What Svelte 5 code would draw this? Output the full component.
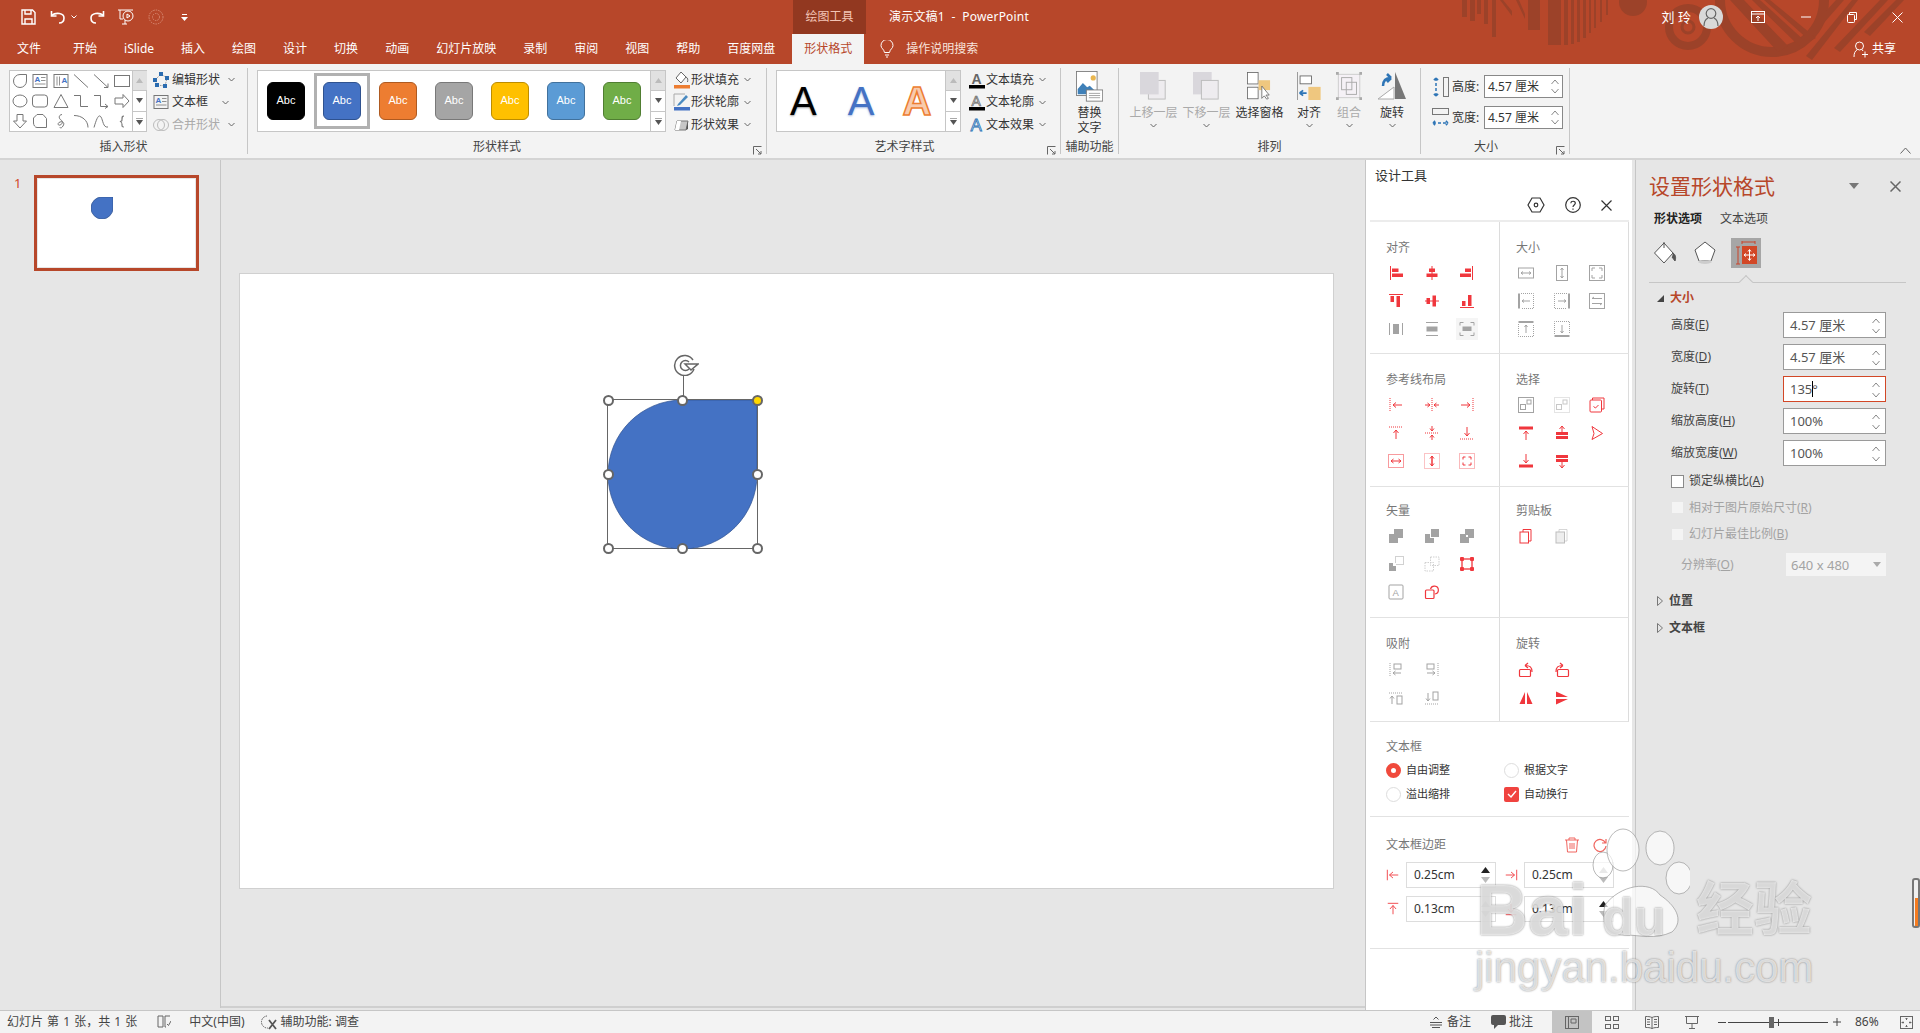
<script>
	const F = 'fill="currentColor" stroke="none"';

	const ICONS = {
		// shape gallery
		gTear: '<path d="M8 1.5h6.5V8A6.5 6.5 0 1 1 8 1.5Z"/>',
		gText: '<rect x="1" y="1.5" width="14" height="13"/><text x="2.5" y="9" font-size="8" font-weight="700" fill="#4472c4" stroke="none" font-family="Liberation Sans">A</text><path d="M9 4.5h4.5M9 7.5h4.5M3 11h10.5" stroke-width=".8"/>',
		gVText: '<rect x="1" y="1.5" width="14" height="13"/><text x="8.5" y="10" font-size="8" font-weight="700" fill="#4472c4" stroke="none" font-family="Liberation Sans">A</text><path d="M4 3.5v9M6.5 3.5v9" stroke-width=".8"/>',
		gLine: '<path d="M1 1.5 15 14.5"/>',
		gArrow: '<path d="M1 1.5 15 14.5M15 14.5h-4M15 14.5v-4"/>',
		gRect: '<rect x=".5" y="2.5" width="15" height="11"/>',
		gOval: '<ellipse cx="8" cy="8" rx="7" ry="6"/>',
		gRound: '<rect x=".5" y="2" width="15" height="12" rx="3"/>',
		gTri: '<path d="M8 1.5 15 14.5H1Z"/>',
		gElbow: '<path d="M1 2.5h6.5v11H15"/>',
		gElbowA: '<path d="M1 2.5h6.5v11H15M12 11l3 2.5-3 2"/>',
		gBlock: '<path d="M1 5h8V1.5L15 8l-6 6.5V11H1Z"/>',
		gDown: '<path d="M5 1.5h6V8h3.5L8 15 1.5 8H5Z"/>',
		gFlow: '<path d="M1.5 5 5 1.5h6l3.5 4v9H5C3 14.5 1.5 12 1.5 10Z"/>',
		gSquig: '<path d="M9 1.5C5 2 6 6 8 7s2 4-1 5c-2 1-3-2 0-3s5 1 3 4-3 2-3 1"/>',
		gArc: '<path d="M1 2.5c8 0 14 5 14 12"/>',
		gCurve: '<path d="M1 14.5C4 4 6 1 8 4s2 11 7 10"/>',
		gBrace: '<path d="M10 3c-2 0-2 1-2 3s0 2-2 2.5c2 .5 2 1 2 3s0 2.5 2 2.5" stroke-width="1.2"/>',
		// align
		alignL: `<path d="M2.5 1v14"/><path ${F} d="M4 3.5h6.5V7H4zM4 8.5h11V12H4z"/>`,
		alignC: `<path d="M8 1v14"/><path ${F} d="M5 3.5h6V7H5zM2.5 8.5h11V12h-11z"/>`,
		alignR: `<path d="M13.5 1v14"/><path ${F} d="M6 3.5h6V7H6zM1 8.5h11V12H1z"/>`,
		alignT: `<path d="M1 1.5h14"/><path ${F} d="M2.5 3H6v6H2.5zM8.5 3H12v11H8.5z"/>`,
		alignM: `<path d="M1 8h14"/><path ${F} d="M2.5 5H6v6H2.5zM8.5 2.5H12v11H8.5z"/>`,
		alignB: `<path d="M1 14.5h14"/><path ${F} d="M3 8h3.5v5H3zM9 2h3.5v11H9z"/>`,
		distH: `<path d="M1.5 2v12M14.5 2v12"/><rect ${F} x="5" y="3" width="6" height="10"/>`,
		distV: `<path d="M2 1.5h12M2 14.5h12"/><rect ${F} x="2.5" y="5.5" width="11" height="5"/>`,
		distBox: `<path d="M1 4.5V1.5h3.5M11.5 1.5H15v3M15 11.5v3h-3.5M4.5 14.5H1v-3"/><rect ${F} x="3.5" y="5.5" width="9" height="4.5"/>`,
		// size
		sizeW: '<rect x=".5" y="3" width="15" height="10"/><path d="M3 8h10M3 8l2-1.5M3 8l2 1.5M13 8l-2-1.5M13 8l-2 1.5"/>',
		sizeH: '<rect x="2.5" y=".5" width="11" height="15"/><path d="M8 3v10M8 3 6.5 5M8 3l1.500 2M8 13l-1.500-2M8 13l1.500-2"/>',
		sizeB: '<rect x=".5" y=".5" width="15" height="15"/><path d="M3 6V3h3M10 3h3v3M13 10v3h-3M6 13H3v-3"/>',
		extL: '<path d="M1 .5v15" stroke-width="2"/><path d="M3 .5h12.500v15H3" stroke-dasharray="1 1"/><path d="M4 8h8M4 8l2-1.500M4 8l2 1.500"/>',
		extR: '<path d="M15 .5v15" stroke-width="2"/><path d="M13 .5H.5v15H13" stroke-dasharray="1 1"/><path d="M4 8h8M12 8l-2-1.500M12 8l-2 1.500"/>',
		sizeEq: '<rect x=".5" y=".5" width="15" height="15"/><path d="M3 5.500h10M3 5.500l2-1.500M3 10.500h10M13 10.500l-2 1.500"/>',
		extT: '<path d="M.5 1h15" stroke-width="2"/><path d="M.5 3v12.500h15V3" stroke-dasharray="1 1"/><path d="M8 4v8M8 4 6.500 6M8 4l1.500 2"/>',
		extB: '<path d="M.5 15h15" stroke-width="2"/><path d="M.5 13V.5h15V13" stroke-dasharray="1 1"/><path d="M8 4v8M8 12l-1.500-2M8 12l1.500-2"/>',
		// guides
		guL: '<path d="M2 1v14" stroke-dasharray="1 1"/><path d="M5 8h9M5 8l3-2.500M5 8l3 2.500"/>',
		guC: '<path d="M8 1v14" stroke-dasharray="1 1"/><path d="M1 8h5M6 8 3.500 6M6 8l-2.500 2M15 8h-5M10 8l2.500-2M10 8l2.500 2"/>',
		guR: '<path d="M14 1v14" stroke-dasharray="1 1"/><path d="M2 8h9M11 8 8 5.500M11 8l-3 2.500"/>',
		guT: '<path d="M1 2h14" stroke-dasharray="1 1"/><path d="M8 5v9M8 5 5.500 8M8 5l2.500 3"/>',
		guM: '<path d="M1 8h14" stroke-dasharray="1 1"/><path d="M8 1v5M8 6 6 3.500M8 6l2-2.500M8 15v-5M8 10l-2 2.500M8 10l2 2.500"/>',
		guB: '<path d="M1 14h14" stroke-dasharray="1 1"/><path d="M8 2v9M8 11 5.500 8M8 11l2.500-3"/>',
		guW: '<rect x=".5" y="1.500" width="15" height="13" stroke-dasharray="1 1"/><path d="M3 8h10M3 8l2.500-2M3 8l2.500 2M13 8l-2.500-2M13 8l-2.500 2"/>',
		guH: '<rect x=".5" y=".5" width="15" height="15" stroke-dasharray="1 1" opacity=".6"/><path d="M8 3v10" stroke-width="1.500"/><path d="M8 3 6 5.500M8 3l2 2.500M8 13l-2-2.500M8 13l2-2.500"/>',
		guB2: '<rect x=".5" y=".5" width="15" height="15" stroke-dasharray="1 1" opacity=".7"/><path d="M4 6.500V4h2.500M9.500 4H12v2.500M12 9.500V12H9.500M6.500 12H4V9.500"/>',
		// select
		selA: '<rect x=".5" y=".5" width="15" height="15"/><rect x="2.500" y="7.500" width="5" height="5"/><rect x="9" y="3" width="4" height="4"/>',
		selB: '<rect x=".5" y=".5" width="15" height="15" stroke-dasharray="1 1"/><rect x="2.500" y="7.500" width="5" height="5"/><rect x="9" y="3" width="4" height="4"/>',
		selC: '<rect x="1" y="3" width="11.500" height="12" rx="1"/><path d="M3.500 3V1h11.500v11h-2.500"/><path d="M4.500 9.500 6.500 11l3-3"/>',
		selT: `<rect ${F} x="1" y="1.500" width="14" height="3"/><path d="M8 6v9M8 6 5.500 9M8 6l2.500 3"/>`,
		selM: `<rect ${F} x="2" y="7" width="12" height="3"/><rect ${F} x="2" y="11" width="12" height="3"/><path d="M8 1v6M8 1 5.500 4M8 1l2.500 3"/>`,
		selP: '<path d="M3 1.500 13.500 8.500 3 14.500l2-6Z"/>',
		selBo: `<rect ${F} x="1" y="11.500" width="14" height="3"/><path d="M8 1v9M8 10 5.500 7M8 10l2.500-3"/>`,
		selN: `<rect ${F} x="2" y="2" width="12" height="3"/><rect ${F} x="2" y="6" width="12" height="3"/><path d="M8 9v6M8 15l-2.500-3M8 15l2.500-3"/>`,
		// vector
		vUnion: `<path ${F} d="M1 6h5V1h9v9h-5v5H1Z"/>`,
		vSub: `<path ${F} d="M1 6h5v4h4v5H1Z"/><rect ${F} x="7" y="1" width="8" height="8"/>`,
		vInt: `<path ${F} fill-rule="evenodd" d="M1 6h5V1h9v9h-5v5H1ZM7 7v2h2V7Z"/>`,
		vFrag: `<path ${F} d="M1 7h7v8H1Z"/><rect x="7.500" y=".5" width="8" height="8" stroke-dasharray="1 1"/><rect x="5" y="7" width="3" height="3" fill="#fff" stroke="none"/>`,
		vCopy: '<rect x="1" y="6.500" width="8.500" height="8.500" stroke-dasharray="1.500 1"/><rect x="6.500" y="1" width="8.500" height="8.500" stroke-dasharray="1.500 1"/>',
		vNode: `<rect x="3" y="3" width="10" height="10" stroke-width="1.300"/><rect ${F} x="1" y="1" width="4" height="4" rx="1"/><rect ${F} x="11" y="1" width="4" height="4" rx="1"/><rect ${F} x="1" y="11" width="4" height="4" rx="1"/><rect ${F} x="11" y="11" width="4" height="4" rx="1"/>`,
		vText: '<rect x="1" y="1" width="14" height="14" rx="1"/><text x="4.500" y="12" font-size="9.500" fill="currentColor" stroke="none" font-family="Liberation Sans">A</text>',
		vShape: '<rect x="1.500" y="6" width="8.500" height="8.500" rx="1" stroke-width="1.200"/><path d="M6.500 5A4 4 0 1 1 11 10" stroke-width="1.200"/>',
		// clipboard
		clipA: '<rect x="2" y="4" width="8.500" height="11"/><path d="M5 4V1.500h8V13h-2.500"/>',
		clipB: '<rect x="2" y="4" width="8.500" height="11" fill="#eee"/><path d="M5 4V1.500h8V13h-2.500" opacity=".6"/>',
		// snap
		snA: '<path d="M2 1v14" stroke-dasharray="1 1"/><rect x="6" y="2" width="7" height="5"/><path d="M5 11h8M5 11l2.500-2M5 11l2.500 2"/>',
		snB: '<path d="M14 1v14" stroke-dasharray="1 1"/><rect x="3" y="2" width="7" height="5"/><path d="M3 11h8M11 11 8.500 9M11 11l-2.500 2"/>',
		snC: '<path d="M1 3h14" stroke-dasharray="1 1"/><rect x="9" y="6" width="5" height="8"/><path d="M4 6v8M4 6 2 8.500M4 6l2 2.500"/>',
		snD: '<path d="M1 14h14" stroke-dasharray="1 1"/><rect x="9" y="2" width="5" height="8"/><path d="M4 3v8M4 11 2 8.500M4 11l2-2.500"/>',
		// rotate
		rotL: '<rect x="1.500" y="7.500" width="11" height="7" rx="1" stroke-width="1.200"/><path d="M14 10C14 5 12 3.500 7 3.500M7 3.500 10 1M7 3.500l3 2.500" stroke-width="1.200"/>',
		rotR: '<rect x="3.500" y="7.500" width="11" height="7" rx="1" stroke-width="1.200"/><path d="M2 10c0-5 2-6.500 7-6.500M9 3.500 6 1M9 3.500 6 6" stroke-width="1.200"/>',
		flipH: `<path ${F} d="M1.500 14 7 2v12ZM14.500 14 9 2v12Z"/>`,
		flipV: `<path ${F} d="M2 1.500 14 7H2ZM2 14.500 14 9H2Z"/>`,
		// margins
		mL: '<path d="M1.500 2v12M4 8h10M4 8l4-3.500M4 8l4 3.500"/>',
		mR: '<path d="M14.500 2v12M2 8h10M12 8 8 4.500M12 8l-4 3.500"/>',
		mT: '<path d="M2 1.500h12M8 4v10M8 4 4.500 8M8 4l3.500 4"/>',
		mB: '<path d="M2 14.500h12M8 2v10M8 12 4.500 8M8 12l3.500-4"/>'
	};

	const tabs = ['文件', '开始', 'iSlide', '插入', '绘图', '设计', '切换', '动画', '幻灯片放映', '录制', '审阅', '视图', '帮助', '百度网盘'];
	const galleryShapes = ['gTear', 'gText', 'gVText', 'gLine', 'gArrow', 'gRect', 'gOval', 'gRound', 'gTri', 'gElbow', 'gElbowA', 'gBlock', 'gDown', 'gFlow', 'gSquig', 'gArc', 'gCurve', 'gBrace'];
	const swatches = [
		{ bg: '#000000', line: '#000000' },
		{ bg: '#4472c4', line: '#2f528f', selected: true },
		{ bg: '#ed7d31', line: '#ae5a21' },
		{ bg: '#a5a5a5', line: '#787878' },
		{ bg: '#ffc000', line: '#bc8c00' },
		{ bg: '#5b9bd5', line: '#41719c' },
		{ bg: '#70ad47', line: '#507e32' }
	];
	const arrange = [
		{ label: '上移一层', w: 53, off: true, kind: 'up' },
		{ label: '下移一层', w: 53, off: true, kind: 'down' },
		{ label: '选择窗格', w: 53, kind: 'pane' },
		{ label: '对齐', w: 46, kind: 'align', more: true },
		{ label: '组合', w: 34, off: true, kind: 'group', more: true },
		{ label: '旋转', w: 52, kind: 'rotate', more: true }
	];

	const RED = '#f0373d';
	const GREY = '#a3a3a3';
	const rows = [
		{
			h: 132,
			cols: [
				{ title: '对齐', icons: [['alignL', RED], ['alignC', RED], ['alignR', RED], ['alignT', RED], ['alignM', RED], ['alignB', RED], ['distH', GREY], ['distV', GREY], ['distBox', GREY, true]] },
				{ title: '大小', icons: [['sizeW', GREY], ['sizeH', GREY], ['sizeB', GREY], ['extL', GREY], ['extR', GREY], ['sizeEq', GREY], ['extT', GREY], ['extB', GREY]] }
			]
		},
		{
			h: 133,
			cols: [
				{ title: '参考线布局', icons: [['guL', RED], ['guC', RED], ['guR', RED], ['guT', RED], ['guM', RED], ['guB', RED], ['guW', RED], ['guH', RED], ['guB2', RED]] },
				{ title: '选择', icons: [['selA', GREY], ['selB', '#c8c8c8'], ['selC', RED], ['selT', RED], ['selM', RED], ['selP', RED], ['selBo', RED], ['selN', RED]] }
			]
		},
		{
			h: 131,
			tight: true,
			cols: [
				{ title: '矢量', icons: [['vUnion', GREY], ['vSub', GREY], ['vInt', GREY], ['vFrag', GREY], ['vCopy', '#cfcfcf'], ['vNode', RED], ['vText', GREY], ['vShape', RED]] },
				{ title: '剪贴板', icons: [['clipA', RED], ['clipB', '#bdbdbd']] }
			]
		},
		{
			h: 104,
			cols: [
				{ title: '吸附', two: true, icons: [['snA', GREY], ['snB', GREY], ['snC', GREY], ['snD', GREY]] },
				{ title: '旋转', two: true, icons: [['rotL', RED], ['rotR', RED], ['flipH', RED], ['flipV', RED]] }
			]
		}
	];
	const margins = [
		{ icon: 'mL', value: '0.25cm', up: true },
		{ icon: 'mR', value: '0.25cm' },
		{ icon: 'mT', value: '0.13cm' },
		{ icon: 'mB', value: '0.13cm', up: true }
	];
	const sizeRows = [
		{ label: '高度', key: 'E', value: '4.57 厘米' },
		{ label: '宽度', key: 'D', value: '4.57 厘米' },
		{ label: '旋转', key: 'T', value: '135°', focus: true },
		{ label: '缩放高度', key: 'H', value: '100%' },
		{ label: '缩放宽度', key: 'W', value: '100%' }
	];
	const handles = [
		[0, 0], [50, 0], [0, 50], [100, 50], [0, 100], [50, 100], [100, 100]
	];
</script>

{#snippet icon(name, color = 'currentColor', size = 16)}
	<svg class="ico" width={size} height={size} viewBox="0 0 16 16" fill="none" stroke={color} style="color:{color}">{@html ICONS[name]}</svg>
{/snippet}

{#snippet chev()}
	<svg class="chev" width="7" height="5" viewBox="0 0 7 5" fill="none" stroke="#666"><path d="M.5 1 3.500 4 6.500 1" /></svg>
{/snippet}

{#snippet scrollCol()}
	<div class="gscroll">
		<span class="off"><svg width="7" height="5" viewBox="0 0 7 5"><path d="M3.500 0 7 5H0Z" fill="#bbb" /></svg></span>
		<span><svg width="7" height="5" viewBox="0 0 7 5"><path d="M0 0h7L3.500 5Z" fill="#555" /></svg></span>
		<span><svg width="7" height="7" viewBox="0 0 7 7"><path d="M0 0h7" stroke="#555" /><path d="M0 2h7L3.500 7Z" fill="#555" /></svg></span>
	</div>
{/snippet}

{#snippet launcher()}
	<svg class="launch" width="9" height="9" viewBox="0 0 9 9" fill="none" stroke="#666"><path d="M.5 8.500V.5h8M3 3l5 5M8 5v3H5" /></svg>
{/snippet}

{#snippet spin()}
	<span class="spin">
		<svg width="8" height="6" viewBox="0 0 8 6" fill="none" stroke="#888"><path d="M.5 5 4 1l3.500 4" /></svg>
		<svg width="8" height="6" viewBox="0 0 8 6" fill="none" stroke="#888"><path d="M.5 1 4 5l3.500-4" /></svg>
	</span>
{/snippet}

<div class="app">
	<header class="top">
		<svg class="deco" width="460" height="64" viewBox="0 0 460 64" fill="#9c4229">
			<path d="M2 0h5v17H2zM10 0h5v21H10zM17 0h4v14h-4zM24 0h4v24h-4zM32 0h4v37h-4z" />
			<path d="M68 0h12v30H68zM88 0h13v45H88zM104 0h4v45h-4zM111 0h3v44h-3zM117 0h3v42h-3zM123 0h3v38h-3zM129 0h2v33h-2zM134 0h2v28h-2zM140 0h2v22h-2zM146 0h2v15h-2z" />
			<path d="M40 0h3l9 11v5zM56 0h3l6 14v5z" />
			<circle cx="173" cy="2" r="14" />
			<circle cx="228" cy="27" r="19" fill="none" stroke="#9c4229" stroke-width="8" />
			<circle cx="228" cy="27" r="6" fill="none" stroke="#9c4229" stroke-width="3" />
			<circle cx="312" cy="0" r="52" fill="none" stroke="#9c4229" stroke-width="10" />
			<path d="M270 0h14l44 46-10 6zM292 0h8l46 42-7 4zM304 0h6l46 38-6 3z" />
			<path d="M376 0h8l-42 48-5-5zM392 0h6l-46 60-6-4zM420 0h8l-48 52-6-4zM436 0h8l-34 36-6-4z" />
		</svg>

		<div class="titlebar">
			<div class="qat">
				<span class="q" style="width:30px">
					<svg width="15" height="16" viewBox="0 0 15 16" fill="none" stroke="#fff" stroke-width="1.400"><path d="M1 1h10.500L14 3.500V15H1Z" /><path d="M4 1v4h6V1M4 15v-5h7v5" /></svg>
				</span>
				<span class="q" style="width:40px">
					<svg width="16" height="15" viewBox="0 0 16 15" fill="none" stroke="#fff" stroke-width="1.600"><path d="M1.500 5.500C6 2 14 3 14 8c0 3-2 5-5 5" /><path d="M1.500 1v5h5" /></svg>
					<svg width="6" height="4" viewBox="0 0 6 4" fill="none" stroke="#fff"><path d="M.5.5 3 3 5.500.5" /></svg>
				</span>
				<span class="q" style="width:28px">
					<svg width="16" height="15" viewBox="0 0 16 15" fill="none" stroke="#fff" stroke-width="1.600"><path d="M14.500 5.500C10 2 2 3 2 8c0 3 2 5 5 5" /><path d="M14.500 1v5h-5" /></svg>
				</span>
				<span class="q" style="width:30px">
					<svg width="18" height="18" viewBox="0 0 18 18" fill="none" stroke="#fff"><path d="M1 2h15M3 2v9h3" /><circle cx="11" cy="8" r="5" /><path d="M10 6l3 2-3 2Z" /><path d="M5 16h5M8 12v4" /></svg>
				</span>
				<span class="q" style="width:29px">
					<svg width="16" height="16" viewBox="0 0 16 16" fill="none" stroke="#d98b74" stroke-dasharray="1.500 1"><circle cx="8" cy="8" r="7" /><circle cx="8" cy="8" r="3.500" /></svg>
				</span>
				<span class="q" style="width:29px">
					<svg width="7" height="7" viewBox="0 0 7 7" fill="#fff"><path d="M1 0h5v1H1zM0 3h7L3.500 7Z" /></svg>
				</span>
			</div>
			<div class="ctx">绘图工具</div>
			<div class="doc">演示文稿1&nbsp; -&nbsp; PowerPoint</div>
			<div class="win">
				<span class="user">刘 玲</span>
				<span class="avatar">
					<svg width="16" height="20" viewBox="0 0 16 20" fill="none" stroke="#666" stroke-width="1.200"><circle cx="8" cy="6.500" r="4.800" /><path d="M1 19c0-5 2-7 4-8M15 19c0-5-2-7-4-8" /></svg>
				</span>
				<svg class="w1" width="14" height="12" viewBox="0 0 14 12" fill="none" stroke="#fff"><rect x=".5" y=".5" width="13" height="11" /><path d="M.5 3h13M7 10V5M5 7l2-2 2 2" /></svg>
				<svg class="w2" width="10" height="10" viewBox="0 0 10 10" stroke="#fff"><path d="M0 5h10" /></svg>
				<svg class="w3" width="10" height="11" viewBox="0 0 10 11" fill="none" stroke="#fff"><rect x=".5" y="2.500" width="7" height="8" rx="1" /><path d="M2.500 2.500V.5h7v7H8" /></svg>
				<svg class="w4" width="11" height="11" viewBox="0 0 11 11" stroke="#fff"><path d="M.5.5l10 10M10.500.5l-10 10" /></svg>
			</div>
		</div>

		<nav class="tabs">
			{#each tabs as t}
				<span class="tab">{t}</span>
			{/each}
			<span class="tab active">形状格式</span>
			<span class="tell">
				<svg width="14" height="18" viewBox="0 0 14 18" fill="none" stroke="#fff"><path d="M4.500 12.500C4 9 1 8.500 1 5.500a6 6 0 0 1 12 0c0 3-3 3.500-3.500 7Z" /><path d="M5 15h4M6 17h2" /></svg>
				操作说明搜索
			</span>
			<span class="share">
				<svg width="15" height="17" viewBox="0 0 15 17" fill="none" stroke="#fff"><circle cx="6.500" cy="5" r="4" /><path d="M1 16c0-4 1-6 3.500-7.500M9 8.500 10 10M9 13.500h6M12 10.500v6" /></svg>
				共享
			</span>
		</nav>
	</header>

	<section class="ribbon">
		<div class="group" style="width:248px">
			<div class="gbody">
				<div class="gallery shapes">
					<div class="shapegrid">
						{#each galleryShapes as s}
							{@render icon(s, '#777')}
						{/each}
					</div>
					{@render scrollCol()}
				</div>
				<div class="cmds">
					<div class="cmd">
						<svg class="ci" width="16" height="16" viewBox="0 0 16 16" fill="none"><path d="M2 8 8 2l6 4-2 8-8-1Z" stroke="#999" stroke-dasharray="1.500 1" /><g fill="#2b6cb0"><rect x="6" y="0" width="4" height="4" /><rect x="0" y="6" width="4" height="4" /><rect x="12" y="4" width="4" height="4" /><rect x="10" y="12" width="4" height="4" /><rect x="2" y="11" width="4" height="4" /></g></svg>
						编辑形状 {@render chev()}
					</div>
					<div class="cmd">
						<span class="ci">{@render icon('gText', '#777')}</span>
						文本框 &nbsp;{@render chev()}
					</div>
					<div class="cmd off">
						<svg class="ci" width="16" height="16" viewBox="0 0 16 16" fill="none" stroke="#bbb"><circle cx="6" cy="8" r="5.500" /><circle cx="10" cy="8" r="5.500" /></svg>
						合并形状 {@render chev()}
					</div>
				</div>
			</div>
			<div class="glabel">插入形状</div>
		</div>

		<div class="group" style="width:519px">
			<div class="gbody">
				<div class="gallery styles">
					<div class="swatches">
						{#each swatches as s}
							<div class="swatch-wrap" class:selected={s.selected}>
								<div class="swatch" style="background:{s.bg};border-color:{s.line}">Abc</div>
							</div>
						{/each}
					</div>
					{@render scrollCol()}
				</div>
				<div class="cmds c2">
					<div class="cmd">
						<svg class="ci" width="18" height="18" viewBox="0 0 18 18" fill="none"><path d="M8 1l5 5-5 6-5-5Z" stroke="#666" fill="#fff" /><path d="M13 6c2 1 2 3 1.500 5" stroke="#666" /><rect x="1" y="14" width="16" height="3.500" fill="#ed7d31" /></svg>
						形状填充 {@render chev()}
					</div>
					<div class="cmd">
						<svg class="ci" width="18" height="18" viewBox="0 0 18 18" fill="none"><path d="M1 1h11" stroke="#aaa" /><path d="M1 1v12" stroke="#aaa" /><path d="M5 11 13 2l2 2-8 8-3 1Z" fill="#4a8ac0" /><rect x="1" y="14" width="16" height="3.500" fill="#4472c4" /></svg>
						形状轮廓 {@render chev()}
					</div>
					<div class="cmd">
						<svg class="ci" width="18" height="18" viewBox="0 0 18 18"><path d="M4 5h11l-2 9H2Z" fill="#c7c7c7" stroke="#777" /><path d="M4 5 2 14h4l2-9Z" fill="#fff" /><path d="M13 14 15 5v8Z" fill="#555" /></svg>
						形状效果 {@render chev()}
					</div>
				</div>
			</div>
			<div class="glabel" style="padding-right:20px">形状样式</div>
			{@render launcher()}
		</div>

		<div class="group" style="width:294px">
			<div class="gbody">
				<div class="gallery wordart">
					<div class="letters">
						<span class="a black">A</span>
						<span class="a blue">A</span>
						<span class="a orange">A</span>
					</div>
					{@render scrollCol()}
				</div>
				<div class="cmds c2">
					<div class="cmd">
						<svg class="ci" width="18" height="18" viewBox="0 0 18 18"><text x="3.500" y="12.500" font-size="14" font-weight="700" fill="#666" font-family="Liberation Sans">A</text><rect x="1" y="14" width="16" height="3.500" fill="#000" /></svg>
						文本填充 {@render chev()}
					</div>
					<div class="cmd">
						<svg class="ci" width="18" height="18" viewBox="0 0 18 18"><text x="3.500" y="12.500" font-size="14" fill="#fff" stroke="#666" stroke-width=".7" font-family="Liberation Sans">A</text><rect x="1" y="14" width="16" height="3.500" fill="#000" /></svg>
						文本轮廓 {@render chev()}
					</div>
					<div class="cmd">
						<svg class="ci" width="18" height="18" viewBox="0 0 18 18"><text x="2.500" y="15" font-size="17" fill="#d6e4f5" stroke="#2e75b6" stroke-width=".8" font-family="Liberation Sans">A</text></svg>
						文本效果 {@render chev()}
					</div>
				</div>
			</div>
			<div class="glabel" style="padding-right:18px">艺术字样式</div>
			{@render launcher()}
		</div>

		<div class="group" style="width:58px">
			<div class="bigs">
				<div class="big" style="width:57px">
					<div class="bigicon tall">
						<svg width="32" height="36" viewBox="0 0 32 36"><rect x=".5" y=".5" width="24" height="28" fill="#fff" stroke="#777" /><circle cx="20" cy="8" r="3" fill="#e9b64f" /><path d="M2 27V21l6-7 5 5 3-2 6 6v4Z" fill="#3f80b8" /><rect x="12" y="22" width="19" height="13" fill="#fff" stroke="#777" /><path d="M15 26h13M15 28.500h13M15 31h13" stroke="#999" /></svg>
					</div>
					<span class="biglabel two">替换<br />文字</span>
				</div>
			</div>
			<div class="glabel">辅助功能</div>
		</div>

		<div class="group" style="width:302px">
			<div class="bigs pad8">
				{#each arrange as b}
					<div class="big" class:off={b.off} style="width:{b.w}px">
						<div class="bigicon">
							{#if b.kind === 'up'}
								<svg width="28" height="30" viewBox="0 0 28 30"><rect x="9" y="9" width="18" height="20" fill="#eeecef" stroke="#bbb" /><rect x="0" y="0" width="20" height="24" fill="#d9d7dc" /></svg>
							{:else if b.kind === 'down'}
								<svg width="28" height="30" viewBox="0 0 28 30"><rect x="0" y="0" width="20" height="24" fill="#d9d7dc" /><rect x="9" y="9" width="18" height="20" fill="#eeecef" stroke="#bbb" /></svg>
							{:else if b.kind === 'pane'}
								<svg width="30" height="34" viewBox="0 0 30 34"><rect x=".5" y=".5" width="13" height="14" fill="#fff" stroke="#666" /><rect x=".5" y="18.500" width="13" height="14" fill="#fff" stroke="#666" /><rect x="14" y="10" width="14" height="12" fill="#efc77f" /><path d="M18 17v15l3-3 3 4 2-1-3-4h4Z" fill="#fff" stroke="#666" /></svg>
							{:else if b.kind === 'align'}
								<svg width="28" height="32" viewBox="0 0 28 32"><path d="M.5 0v32" stroke="#888" /><rect x="3.500" y="4.500" width="13" height="9" fill="#fff" stroke="#666" /><rect x="13" y="17" width="14" height="15" fill="#efc77f" /><path d="M3 24h8M3 24l4-3M3 24l4 3" stroke="#2e75b6" stroke-width="2" fill="none" /></svg>
							{:else if b.kind === 'group'}
								<svg width="28" height="30" viewBox="0 0 28 30" fill="none"><rect x="2.500" y="2.500" width="23" height="25" fill="#f5f1f6" stroke="#ccc" /><rect x="6" y="6" width="11" height="13" stroke="#aaa" /><rect x="11" y="11" width="11" height="13" stroke="#aaa" /><g fill="#aaa"><rect width="3" height="3" /><rect x="25" width="3" height="3" /><rect y="27" width="3" height="3" /><rect x="25" y="27" width="3" height="3" /></g></svg>
							{:else}
								<svg width="30" height="28" viewBox="0 0 30 28"><path d="M1 27 17 15v12Z" fill="#fff" stroke="#aaa" /><path d="M18 0l11 27H18Z" fill="#777" /><path d="M6 14C6 7 10 6 14 6M14 6l-4-4M14 6l-4 4" stroke="#2e75b6" stroke-width="2.500" fill="none" /></svg>
							{/if}
						</div>
						<span class="biglabel">{b.label}</span>
						{#if b.off || b.more}
							<span class="bigchev">{@render chev()}</span>
						{/if}
					</div>
				{/each}
			</div>
			<div class="glabel">排列</div>
		</div>

		<div class="group" style="width:149px">
			<div class="sizes">
				<div class="sizerow">
					<svg width="17" height="20" viewBox="0 0 17 20" fill="none"><rect x="11.500" y=".5" width="5" height="19" stroke="#777" /><path d="M4 1v18M4 1 1 4M4 1l3 3M4 19l-3-3M4 19l3-3" stroke="#2e75b6" stroke-width="1.500" stroke-dasharray="3 2" /></svg>
					<span class="sl">高度:</span>
					<span class="field">4.57 厘米 {@render spin()}</span>
				</div>
				<div class="sizerow">
					<svg width="17" height="20" viewBox="0 0 17 20" fill="none"><rect x=".5" y=".5" width="16" height="6" stroke="#777" /><path d="M1 15h15M1 15l3-3M1 15l3 3M16 15l-3-3M16 15l-3 3" stroke="#2e75b6" stroke-width="1.500" stroke-dasharray="3 2" /></svg>
					<span class="sl">宽度:</span>
					<span class="field">4.57 厘米 {@render spin()}</span>
				</div>
			</div>
			<div class="glabel" style="padding-right:18px">大小</div>
			{@render launcher()}
		</div>

		<svg class="collapse" width="11" height="7" viewBox="0 0 11 7" fill="none" stroke="#666"><path d="M.5 6.500 5.500 1l5 5.500" /></svg>
	</section>

	<main class="main">
		<aside class="thumbs">
			<span class="num">1</span>
			<div class="thumb">
				<svg width="22" height="22" viewBox="0 0 149 149"><path d="M74.500 0H149V74.500A74.500 74.500 0 1 1 74.500 0Z" fill="#4472c4" stroke="#2f528f" stroke-width="5" /></svg>
			</div>
		</aside>

		<div class="canvas">
			<div class="slide">
				<div class="shape">
					<svg class="drop" width="149" height="149" viewBox="0 0 149 149"><path d="M74.500 0H149V74.500A74.500 74.500 0 1 1 74.500 0Z" fill="#4472c4" stroke="#2f528f" stroke-width=".7" /></svg>
					<div class="stem"></div>
					<svg class="rot" width="26" height="22" viewBox="0 0 26 22" fill="none" stroke="#666" stroke-width="1.500"><path d="M21 15A10 10 0 1 1 20 6" /><path d="M16 15a5 5 0 1 1 0-7" /><path d="M12 10l6 6 7-6Z" fill="#fff" /></svg>
					{#each handles as [x, y]}
						<span class="handle" style="left:{x}%;top:{y}%"></span>
					{/each}
					<span class="handle yellow" style="left:100%;top:0"></span>
				</div>
			</div>
		</div>

		<aside class="design">
			<div class="dtitle">设计工具</div>
			<div class="dtools">
				<svg width="18" height="16" viewBox="0 0 18 16" fill="none" stroke="#333" stroke-width="1.200"><path d="M5 1h8l4 7-4 7H5L1 8Z" /><circle cx="9" cy="8" r="1.800" /></svg>
				<svg width="16" height="16" viewBox="0 0 16 16" fill="none" stroke="#333" stroke-width="1.200"><circle cx="8" cy="8" r="7.300" /><path d="M5.800 6.200C6 3.500 10.500 3.700 10.300 6.300 10.200 8 8 8 8 10" /><path d="M8 11.500v1.300" /></svg>
				<svg width="11" height="11" viewBox="0 0 11 11" stroke="#333" stroke-width="1.200"><path d="M.5.5l10 10M10.500.5l-10 10" /></svg>
			</div>

			{#each rows as row}
				<div class="drow" class:tight={row.tight} style="height:{row.h}px">
					{#each row.cols as col}
						<div class="dcol">
							<div class="dhead">{col.title}</div>
							<div class="igrid" class:two={col.two}>
								{#each col.icons as [name, color, hl]}
									<span class="cell" class:hl>{@render icon(name, color)}</span>
								{/each}
							</div>
						</div>
					{/each}
				</div>
			{/each}

			<div class="dsec tb">
				<div class="dhead">文本框</div>
				<div class="opts">
					<span class="opt"><i class="radio on"></i>自由调整</span>
					<span class="opt"><i class="radio"></i>根据文字</span>
					<span class="opt"><i class="radio"></i>溢出缩排</span>
					<span class="opt"><i class="checked"><svg width="10" height="8" viewBox="0 0 10 8" fill="none" stroke="#fff" stroke-width="1.400"><path d="M1 4l3 3 5-6" /></svg></i>自动换行</span>
				</div>
			</div>

			<div class="dsec mg">
				<div class="mghead">
					<span class="dhead">文本框边距</span>
					<svg class="trash" width="16" height="16" viewBox="0 0 16 16" fill="none" stroke="#f0655f"><path d="M1 3h14M5 3V1h6v2M2.500 3l1 12h9l1-12M6 6v6M8 6v6M10 6v6" /></svg>
					<svg width="14" height="14" viewBox="0 0 14 14" fill="none" stroke="#f0655f" stroke-width="1.200"><path d="M12.500 5A6 6 0 1 0 13 8M13 1v4H9" /></svg>
				</div>
				<div class="mggrid">
					{#each margins as m}
						<div class="mgitem">
							{@render icon(m.icon, RED, 14)}
							<div class="mgfield">
								{m.value}
								<span class="mgspin">
									<svg width="9" height="6" viewBox="0 0 9 6"><path d="M4.500 0 9 6H0Z" fill={m.up ? '#222' : '#bbb'} /></svg>
									<svg width="9" height="6" viewBox="0 0 9 6"><path d="M0 0h9L4.500 6Z" fill="#bbb" /></svg>
								</span>
							</div>
						</div>
					{/each}
				</div>
			</div>
		</aside>

		<aside class="format">
			<div class="fhead">
				<span class="ftitle">设置形状格式</span>
				<svg width="10" height="6" viewBox="0 0 10 6"><path d="M0 0h10L5 6Z" fill="#777" /></svg>
				<svg width="11" height="11" viewBox="0 0 11 11" stroke="#666" stroke-width="1.500"><path d="M.5.5l10 10M10.500.5l-10 10" /></svg>
			</div>
			<div class="ftabs"><b>形状选项</b><span>文本选项</span></div>
			<div class="ficons">
				<svg width="26" height="26" viewBox="0 0 26 26" fill="none" stroke="#555"><path d="M11 3 1.500 13 11 23l9-10Z" fill="#fff" /><path d="M11 8V2M20 13c3 2 3 5 2 8l-3-4" fill="#555" /></svg>
				<svg width="24" height="26" viewBox="0 0 24 26" fill="none" stroke="#555"><path d="M12 2 22 10l-4 11H6L2 10Z" fill="#fff" /><path d="M6 21c3 2 9 2 12 0" stroke="#ccc" stroke-width="3" /></svg>
				<span class="fsel">
					<svg width="22" height="24" viewBox="0 0 22 24" fill="none"><path d="M7 1h13M7 0v3M20 0v3" stroke="#c9452a" /><path d="M1 6h4M3 6v17M1 23h4" stroke="#c9452a" /><rect x="7" y="5" width="15" height="18" fill="#d24726" /><path d="M14.500 9v10M9.500 14h10" stroke="#fff" /><path d="M13 10.500l1.500-2 1.500 2M13 17.500l1.500 2 1.500-2M11 12.500l-2 1.500 2 1.500M18 12.500l2 1.500-2 1.500" stroke="#fff" /></svg>
				</span>
			</div>
			<div class="fline"></div>
			<div class="fsec open"><svg width="7" height="7" viewBox="0 0 7 7"><path d="M7 0v7H0Z" fill="#444" /></svg>大小</div>
			<div class="frows">
				{#each sizeRows as r}
					<div class="frow">
						<span class="flabel">{r.label}(<u>{r.key}</u>)</span>
						<span class="finput" class:focus={r.focus}>
							{#if r.focus}135<i class="caret"></i>°{:else}{r.value}{/if}
							{@render spin()}
						</span>
					</div>
				{/each}
			</div>
			<div class="fcheck"><i></i><span>锁定纵横比(<u>A</u>)</span></div>
			<div class="fcheck off"><i></i><span>相对于图片原始尺寸(<u>R</u>)</span></div>
			<div class="fcheck off"><i></i><span>幻灯片最佳比例(<u>B</u>)</span></div>
			<div class="fres">
				<span>分辨率(<u>O</u>)</span>
				<span class="fselect">640 x 480
					<svg width="8" height="5" viewBox="0 0 8 5"><path d="M0 0h8L4 5Z" fill="#aaa" /></svg>
				</span>
			</div>
			<div class="fsec one"><svg width="6" height="10" viewBox="0 0 6 10" fill="none" stroke="#777"><path d="M.5.5 5.500 5 .5 9.500Z" /></svg><b>位置</b></div>
			<div class="fsec two"><svg width="6" height="10" viewBox="0 0 6 10" fill="none" stroke="#777"><path d="M.5.5 5.500 5 .5 9.500Z" /></svg><b>文本框</b></div>
		</aside>
	</main>

	<footer class="status">
		<span class="s1">幻灯片 第 1 张，共 1 张</span>
		<svg class="s2" width="14" height="14" viewBox="0 0 14 14" fill="none" stroke="#666"><path d="M1 1h5v11H1ZM8 1h5M8 12h1M8 1v11" /><path d="M10 9l1.500 1.500L14 6" /></svg>
		<span class="s3">中文(中国)</span>
		<svg class="s4" width="17" height="15" viewBox="0 0 17 15" fill="none" stroke="#555"><path d="M6 1a6 6 0 1 0 1 12" stroke-dasharray="1.500 1" /><path d="M8 5l7 9M15 5l-7 9" stroke-width="1.800" /></svg>
		<span class="s5">辅助功能: 调查</span>

		<div class="sright">
			<svg width="12" height="12" viewBox="0 0 12 12" fill="none" stroke="#555"><path d="M3.500 3.500 6 1l2.500 2.500M0 6.500h12M0 9h12M2 11.500h8" /></svg>
			<span class="s6">备注</span>
			<svg class="s7" width="15" height="14" viewBox="0 0 15 14"><path d="M2 0h11a2 2 0 0 1 2 2v6a2 2 0 0 1-2 2H7l-4 4v-4H2a2 2 0 0 1-2-2V2a2 2 0 0 1 2-2Z" fill="#555" /></svg>
			<span class="s8">批注</span>
			<span class="view on">
				<svg width="14" height="13" viewBox="0 0 14 13" fill="none" stroke="#666"><rect x=".5" y=".5" width="13" height="12" /><path d="M3.500.5v12M6 3h5v4H6z" /></svg>
			</span>
			<span class="view">
				<svg width="14" height="13" viewBox="0 0 14 13" fill="none" stroke="#666"><rect x=".5" y=".5" width="5" height="4" /><rect x="8.500" y=".5" width="5" height="4" /><rect x=".5" y="8.500" width="5" height="4" /><rect x="8.500" y="8.500" width="5" height="4" /></svg>
			</span>
			<span class="view">
				<svg width="14" height="13" viewBox="0 0 14 13" fill="none" stroke="#666"><path d="M7 1.500C5 .5 3 .5 .5.500v11c2.500 0 4.500 0 6.500 1 2-1 4-1 6.500-1V.5C11 .5 9 .5 7 1.500ZM7 1.500v11M2 3.500h3M2 6h3M2 8.500h3M9 3.500h3M9 6h3M9 8.500h3" /></svg>
			</span>
			<span class="view">
				<svg width="14" height="13" viewBox="0 0 14 13" fill="none" stroke="#666"><path d="M0 .5h14M1.500.5v7h11v-7M7 7.500v5M4 12.500h6" /></svg>
			</span>
			<svg class="minus" width="8" height="1" viewBox="0 0 8 1"><path d="M0 .5h8" stroke="#444" /></svg>
			<div class="slider"><span class="tick"></span><span class="thumbz"></span></div>
			<svg width="8" height="8" viewBox="0 0 8 8" stroke="#444"><path d="M0 4h8M4 0v8" /></svg>
			<span class="zoom">86%</span>
			<svg class="fit" width="13" height="13" viewBox="0 0 13 13" fill="none" stroke="#666"><rect x=".5" y=".5" width="12" height="12" /><path d="M6.500 2v2M5.500 3 6.500 2l1 1M6.500 11V9M5.500 10l1 1 1-1M2 6.500h2M3 5.500 2 6.500l1 1M11 6.500H9M10 5.500l1 1-1 1" /></svg>
		</div>
	</footer>

	<!-- jingyan watermark over the window -->
	<div class="wm">
		<svg class="paw" width="100" height="115" viewBox="0 0 100 115" fill="#fff" fill-opacity=".68" stroke="#8a8a8a" stroke-opacity=".6">
			<ellipse cx="13" cy="39" rx="10" ry="13" />
			<ellipse cx="33" cy="24" rx="16" ry="21" />
			<ellipse cx="70" cy="22" rx="14" ry="17" />
			<ellipse cx="89" cy="52" rx="13" ry="16" />
			<path d="M15 79C30 59 60 54 70 69 85 79 95 94 82 106 65 114 50 109 35 109 20 110 10 100 15 79Z" />
		</svg>
		<span class="wbai">Bai</span>
		<span class="wdu">du</span>
		<span class="wcn">经验</span>
		<span class="wurl">jingyan.baidu.com</span>
	</div>
	<div class="scrollind"><i></i></div>
</div>

<style>
	:global(body) {
		margin: 0;
		background: #e6e6e6;
	}
	.app {
		position: relative;
		display: flex;
		flex-direction: column;
		width: 1920px;
		height: 1033px;
		overflow: hidden;
		font-family: 'Noto Sans', 'Noto Sans CJK SC', sans-serif;
		font-size: 12px;
		color: #444;
		line-height: 16px;
	}
	.ico {
		display: block;
		flex: none;
	}
	svg {
		flex: none;
	}

	/* title area */
	.top {
		position: relative;
		height: 64px;
		background: #b7472a;
		color: #fff;
		flex: none;
	}
	.deco {
		position: absolute;
		left: 1460px;
		top: 0;
	}
	.titlebar {
		position: relative;
		display: flex;
		align-items: center;
		height: 34px;
		padding-left: 13px;
	}
	.qat {
		display: flex;
		align-items: center;
		width: 780px;
	}
	.q {
		display: flex;
		align-items: center;
		justify-content: center;
		gap: 5px;
	}
	.ctx {
		width: 73px;
		height: 34px;
		line-height: 34px;
		text-align: center;
		background: #923820;
		color: #f2c4b6;
	}
	.doc {
		margin-left: 23px;
		letter-spacing: 0.2px;
	}
	.win {
		display: flex;
		align-items: center;
		margin-left: auto;
	}
	.user {
		font-size: 13px;
		margin-right: 8px;
	}
	.avatar {
		display: flex;
		align-items: center;
		justify-content: center;
		width: 24px;
		height: 24px;
		border-radius: 50%;
		background: #d9d9d9;
		overflow: hidden;
		margin-right: 28px;
	}
	.w1 {
		margin-right: 36px;
	}
	.w2 {
		margin-right: 36px;
	}
	.w3 {
		margin-right: 35px;
	}
	.w4 {
		margin-right: 17px;
	}
	.tabs {
		position: relative;
		display: flex;
		align-items: center;
		height: 30px;
		padding-left: 3.500px;
	}
	.tab {
		padding: 0 13.500px;
		line-height: 30px;
		white-space: nowrap;
	}
	.tab:first-child {
		margin-right: 5px;
	}
	.tab.active {
		margin-left: 3.500px;
		padding: 0 12px;
		background: #f3f3f3;
		color: #b7472a;
	}
	.tell {
		display: flex;
		align-items: center;
		gap: 12px;
		margin-left: 16px;
		color: #f8e3dc;
	}
	.share {
		display: flex;
		align-items: center;
		gap: 4px;
		margin-left: auto;
		margin-right: 24px;
	}

	/* ribbon */
	.ribbon {
		position: relative;
		display: flex;
		flex: none;
		height: 96px;
		box-sizing: border-box;
		background: #f3f3f3;
		border-bottom: 2px solid #d4d4d4;
	}
	.group {
		position: relative;
		display: flex;
		flex-direction: column;
		flex: none;
		box-sizing: border-box;
		height: 86px;
		margin-top: 4px;
		border-right: 1px solid #c6c6c6;
	}
	.gbody {
		display: flex;
		padding: 2px 0 0 9px;
		flex: none;
	}
	.glabel {
		position: absolute;
		left: 0;
		right: 0;
		bottom: -1px;
		height: 16px;
		text-align: center;
		white-space: nowrap;
		box-sizing: border-box;
	}
	.launch {
		position: absolute;
		right: 4px;
		bottom: -1px;
	}
	.gallery {
		display: flex;
		height: 62px;
		box-sizing: border-box;
		background: #fff;
		border: 1px solid #c6c6c6;
	}
	.gallery.shapes {
		width: 138px;
	}
	.shapegrid {
		display: grid;
		grid-template-columns: repeat(6, 20.300px);
		grid-template-rows: repeat(3, 20px);
		flex: 1;
		place-items: center;
	}
	.gscroll {
		display: flex;
		flex-direction: column;
		width: 14px;
		border-left: 1px solid #c6c6c6;
		flex: none;
	}
	.gscroll span {
		display: flex;
		flex: 1;
		align-items: center;
		justify-content: center;
		border-bottom: 1px solid #c6c6c6;
	}
	.gscroll span:last-child {
		border-bottom: 0;
	}
	.gscroll .off {
		background: #e1e1e1;
	}
	.gallery.styles {
		width: 409px;
	}
	.swatches {
		display: flex;
		align-items: center;
		flex: 1;
	}
	.swatch-wrap {
		display: flex;
		align-items: center;
		justify-content: center;
		width: 56px;
		height: 56px;
		box-sizing: border-box;
		flex: none;
	}
	.swatch-wrap.selected {
		border: 3px solid #b1b1b1;
		outline: 0;
		box-shadow: inset 0 0 0 1px #fff;
	}
	.swatch {
		width: 38px;
		height: 38px;
		box-sizing: border-box;
		border: 1px solid;
		border-radius: 6px;
		color: #fff;
		text-align: center;
		font: 11px/34px 'Liberation Sans', sans-serif;
	}
	.gallery.wordart {
		width: 185px;
	}
	.letters {
		display: flex;
		align-items: center;
		flex: 1;
		padding-left: 13px;
		gap: 31px;
	}
	.a {
		font: 40px/58px 'Liberation Sans', sans-serif;
	}
	.a.black {
		color: #000;
		text-shadow: 0 1px 2px rgba(0, 0, 0, 0.4);
	}
	.a.blue {
		color: #4472c4;
		text-shadow: 0 1px 2px rgba(68, 114, 196, 0.5);
	}
	.a.orange {
		color: #f8cbad;
		-webkit-text-stroke: 1.500px #ed7d31;
		font-weight: 700;
		margin-left: -3px;
	}
	.cmds {
		display: flex;
		flex-direction: column;
		margin: -1.500px 0 0 6px;
	}
	.cmds.c2 {
		margin-left: 7px;
	}
	.cmds.c2 .cmd {
		gap: 0;
	}
	.cmd {
		display: flex;
		align-items: center;
		gap: 3px;
		height: 22.600px;
		white-space: nowrap;
		color: #333;
	}
	.cmd :global(.chev) {
		margin-left: 5px;
	}
	.cmd.off {
		color: #aaa;
	}
	.ci {
		display: block;
		flex: none;
	}
	.bigs {
		display: flex;
		padding-top: 3px;
	}
	.bigs.pad8 {
		padding-left: 8px;
	}
	.big {
		display: flex;
		flex-direction: column;
		align-items: center;
		flex: none;
		color: #333;
	}
	.bigicon {
		display: flex;
		align-items: flex-end;
		justify-content: center;
		height: 29px;
	}
	.bigicon svg {
		height: 28px;
		width: auto;
	}
	.bigicon.tall {
		height: 31px;
	}
	.bigicon.tall svg {
		height: 31px;
	}
	.big.off {
		color: #aaa;
	}
	.biglabel {
		white-space: nowrap;
		margin-top: 5px;
		height: 15px;
		line-height: 15px;
	}
	.biglabel.two {
		height: auto;
		margin-top: 3px;
	}
	.bigchev {
		display: flex;
		margin-top: 3px;
	}
	.sizes {
		display: flex;
		flex-direction: column;
		gap: 8px;
		padding: 7px 0 0 11px;
	}
	.sizerow {
		display: flex;
		align-items: center;
		height: 23px;
	}
	.sl {
		margin-left: 3px;
		width: 32px;
		white-space: nowrap;
		color: #333;
	}
	.field {
		display: flex;
		align-items: center;
		justify-content: space-between;
		width: 79px;
		height: 23px;
		box-sizing: border-box;
		padding: 0 3px;
		background: #fff;
		border: 1px solid #888;
		white-space: nowrap;
		color: #333;
	}
	.spin {
		display: flex;
		flex-direction: column;
		gap: 3px;
	}
	.collapse {
		position: absolute;
		right: 9px;
		bottom: 4px;
	}

	/* main area */
	.main {
		display: flex;
		flex: 1;
		min-height: 0;
		background: #e6e6e6;
	}
	.thumbs {
		display: flex;
		flex: none;
		box-sizing: border-box;
		width: 221px;
		border-right: 1px solid #c6c6c6;
		padding: 15px 0 0 14px;
		margin-bottom: 2px;
	}
	.num {
		width: 20px;
		font-size: 13px;
		color: #d24726;
	}
	.thumb {
		display: flex;
		box-sizing: border-box;
		width: 165px;
		height: 96px;
		background: #fff;
		border: 3px solid #b7472a;
		outline: 1px solid #e6e6e6;
		outline-offset: -4px;
		padding: 19px 0 0 54px;
	}
	.canvas {
		flex: none;
		width: 1144px;
		box-sizing: border-box;
		padding: 113px 0 0 18px;
		border-bottom: 2px solid #cfcfcf;
		margin-bottom: 2px;
	}
	.slide {
		position: relative;
		width: 1095px;
		height: 616px;
		background: #fff;
		border: 1px solid #d0d0d0;
		box-sizing: border-box;
	}
	/* the selected shape sits on the slide canvas */
	.shape {
		position: absolute;
		left: 367px;
		top: 125px;
		width: 151px;
		height: 150px;
		border: 1px solid #666;
		box-sizing: border-box;
	}
	.drop {
		position: absolute;
		left: 0;
		top: 0;
	}
	.stem {
		position: absolute;
		left: 50%;
		top: -24px;
		height: 24px;
		border-left: 1px solid #666;
	}
	.rot {
		position: absolute;
		left: 65px;
		top: -46px;
	}
	.handle {
		position: absolute;
		width: 11px;
		height: 11px;
		margin: -5.500px 0 0 -5.500px;
		border-radius: 50%;
		background: #fff;
		border: 2px solid #666;
		box-sizing: border-box;
	}
	.handle.yellow {
		background: #ffd800;
	}
	.design {
		flex: none;
		width: 267px;
		box-sizing: border-box;
		background: #fff;
		border-left: 1px solid #c6c6c6;
		padding: 6px 3px 0 4px;
	}
	.dtitle {
		padding-left: 5px;
		font-size: 13px;
		line-height: 18px;
		color: #333;
	}
	.dtools {
		display: flex;
		align-items: center;
		justify-content: flex-end;
		gap: 20px;
		height: 16px;
		margin-top: 13px;
		padding-right: 17px;
		padding-bottom: 7px;
		border-bottom: 2px solid #ececec;
		box-sizing: content-box;
	}
	.drow {
		display: flex;
		box-sizing: border-box;
		border-bottom: 1px solid #e2e2e2;
		border-right: 1px solid #dcdcdc;
	}
	.dcol {
		flex: none;
		box-sizing: border-box;
		width: 130px;
		padding: 18px 0 0 16px;
	}
	.drow.tight .dcol {
		padding-top: 16px;
	}
	.dcol:first-child {
		border-right: 1px solid #dcdcdc;
	}
	.dhead {
		color: #777;
		white-space: nowrap;
	}
	.igrid {
		display: grid;
		grid-template-columns: repeat(3, 35.500px);
		grid-auto-rows: 28px;
		margin: 9px 0 0 2px;
	}
	.igrid.two {
		grid-template-columns: repeat(2, 35.500px);
		margin-top: 10px;
	}
	.cell {
		width: 16px;
		height: 16px;
		display: block;
	}
	.cell.hl {
		background: #f5f5f5;
		box-shadow: 0 0 0 3px #f5f5f5;
	}
	.dsec {
		box-sizing: border-box;
		border-bottom: 1px solid #e2e2e2;
		padding-left: 16px;
	}
	.dsec.tb {
		height: 95px;
		padding-top: 17px;
	}
	.opts {
		display: grid;
		grid-template-columns: 118px 110px;
		grid-auto-rows: 24px;
		margin-top: 3px;
		color: #333;
		font-size: 11px;
	}
	.opt {
		display: flex;
		align-items: center;
		gap: 5px;
	}
	.radio {
		width: 15px;
		height: 15px;
		box-sizing: border-box;
		border-radius: 50%;
		border: 1px solid #ddd;
		background: #fff;
	}
	.radio.on {
		border: 5px solid #f04a3c;
	}
	.checked {
		display: flex;
		align-items: center;
		justify-content: center;
		width: 15px;
		height: 15px;
		border-radius: 2px;
		background: #f0433f;
	}
	.dsec.mg {
		height: 132px;
		padding-top: 20px;
	}
	.mghead {
		display: flex;
		align-items: center;
		height: 16px;
	}
	.trash {
		margin-left: auto;
		margin-right: 13px;
	}
	.mghead svg:last-child {
		margin-right: 22px;
	}
	.mggrid {
		display: grid;
		grid-template-columns: 118px 118px;
		grid-auto-rows: 26px;
		row-gap: 8px;
		margin-top: 9px;
	}
	.mgitem {
		display: flex;
		align-items: center;
		gap: 6px;
	}
	.mgfield {
		display: flex;
		align-items: center;
		justify-content: space-between;
		width: 90px;
		height: 26px;
		box-sizing: border-box;
		border: 1px solid #ddd;
		padding: 0 5px 0 7px;
		color: #333;
		background: #fff;
	}
	.mgspin {
		display: flex;
		flex-direction: column;
		gap: 4px;
	}

	/* format pane */
	.format {
		flex: 1;
		min-width: 0;
		box-sizing: border-box;
		margin-left: 3px;
		border-left: 1px solid #c6c6c6;
		padding: 12px 0 0 13px;
		background: #e6e6e6;
	}
	.fhead {
		display: flex;
		align-items: center;
		height: 28px;
	}
	.ftitle {
		font-size: 21px;
		line-height: 28px;
		color: #b7472a;
		margin-right: 74px;
	}
	.fhead svg:last-child {
		margin-left: 31px;
	}
	.ftabs {
		display: flex;
		gap: 18px;
		margin: 11px 0 0 5px;
		color: #444;
	}
	.ftabs b {
		color: #222;
		font-weight: 700;
	}
	.ficons {
		display: flex;
		align-items: center;
		height: 30px;
		margin: 11px 0 0 5px;
		gap: 14px;
	}
	.ficons svg:first-child {
		margin-left: -1px;
	}
	.fsel {
		display: flex;
		align-items: center;
		justify-content: center;
		width: 30px;
		height: 30px;
		background: #a6a6a6;
	}
	.fline {
		position: relative;
		width: 257px;
		height: 1px;
		background: #c6c6c6;
		margin-top: 14px;
	}
	.fline::after {
		content: '';
		position: absolute;
		left: 92px;
		top: -5px;
		width: 9px;
		height: 9px;
		transform: rotate(45deg);
		background: #e6e6e6;
		border: solid #c6c6c6;
		border-width: 1px 0 0 1px;
	}
	.fsec {
		display: flex;
		align-items: center;
		gap: 6px;
		height: 16px;
		padding-left: 8px;
	}
	.fsec.open {
		margin-top: 7px;
		color: #b7472a;
		font-weight: 700;
	}
	.fsec b {
		color: #444;
	}
	.fsec.one {
		margin-top: 17px;
	}
	.fsec.two {
		margin-top: 11px;
	}
	.frows {
		display: flex;
		flex-direction: column;
		gap: 6px;
		margin-top: 6px;
		padding-left: 22px;
	}
	.frow {
		display: flex;
		align-items: center;
	}
	.flabel {
		width: 112px;
		white-space: nowrap;
	}
	.finput {
		position: relative;
		display: flex;
		align-items: center;
		width: 103px;
		height: 26px;
		box-sizing: border-box;
		padding-left: 6px;
		background: #fff;
		border: 1px solid #9a9a9a;
		white-space: nowrap;
		color: #555;
		font-size: 13px;
	}
	.finput .spin {
		position: absolute;
		right: 5px;
		top: 5px;
		gap: 4px;
	}
	.finput.focus {
		border-color: #d24726;
	}
	.caret {
		display: inline-block;
		width: 1px;
		height: 16px;
		background: #000;
		margin-right: -1px;
	}
	.fcheck {
		display: flex;
		align-items: center;
		gap: 5px;
		height: 14px;
		margin: 8px 0 0 22px;
	}
	.fcheck + .fcheck {
		margin-top: 12.500px;
	}
	.fcheck i {
		box-sizing: border-box;
		width: 13px;
		height: 13px;
		background: #fff;
		border: 1px solid #8a8a8a;
	}
	.fcheck span {
		white-space: nowrap;
	}
	.fcheck.off {
		color: #a3a3a3;
	}
	.fcheck.off i {
		background: #f4f4f4;
		border-color: #e6e6e6;
	}
	.fres {
		display: flex;
		align-items: center;
		margin: 12px 0 0 32px;
		color: #a3a3a3;
	}
	.fres > span:first-child {
		width: 105px;
		white-space: nowrap;
	}
	.fselect {
		display: flex;
		align-items: center;
		justify-content: space-between;
		width: 100px;
		height: 23px;
		box-sizing: border-box;
		padding: 0 5px;
		background: #f4f4f4;
		font-size: 13px;
	}

	/* status bar */
	.status {
		display: flex;
		align-items: center;
		flex: none;
		height: 23px;
		box-sizing: border-box;
		background: #f3f3f3;
		border-top: 1px solid #c6c6c6;
		color: #444;
		white-space: nowrap;
	}
	.s1 {
		margin-left: 7px;
		word-spacing: 1px;
	}
	.s2 {
		margin-left: 20px;
	}
	.s3 {
		margin-left: 18px;
	}
	.s4 {
		margin-left: 16px;
	}
	.s5 {
		margin-left: 3px;
	}
	.sright {
		display: flex;
		align-items: center;
		margin-left: auto;
		height: 100%;
	}
	.s6 {
		margin: 0 0 0 5px;
	}
	.s7 {
		margin-left: 20px;
	}
	.s8 {
		margin: 0 19px 0 3px;
	}
	.view {
		display: flex;
		align-items: center;
		justify-content: center;
		width: 40px;
		height: 100%;
	}
	.view.on {
		background: #c3c3c3;
	}
	.minus {
		margin-left: 6px;
	}
	.slider {
		position: relative;
		width: 100px;
		height: 1px;
		margin: 0 5px 0 2px;
		background: #444;
	}
	.tick {
		position: absolute;
		left: 50px;
		top: -3px;
		width: 1px;
		height: 7px;
		background: #444;
	}
	.thumbz {
		position: absolute;
		left: 41px;
		top: -5px;
		width: 5px;
		height: 11px;
		background: #666;
	}
	.zoom {
		margin-left: 14px;
		width: 25px;
	}
	.fit {
		margin: 0 7px 0 20px;
	}

	/* watermark: overlays the window */
	.wm {
		position: absolute;
		left: 0;
		top: 0;
		pointer-events: none;
		width: 0;
		height: 0;
	}
	.wm span {
		position: absolute;
		white-space: nowrap;
		color: rgba(255, 255, 255, 0.7);
		text-shadow: 0 0 2px rgba(90, 90, 90, 0.75);
		font-family: 'Liberation Sans', sans-serif;
	}
	.paw {
		position: absolute;
		left: 1590px;
		top: 826px;
	}
	.wm .wbai {
		left: 1476px;
		top: 866px;
		font-size: 72px;
		line-height: 88px;
		font-weight: 700;
	}
	.wm .wdu {
		left: 1602px;
		top: 887px;
		font-size: 52px;
		line-height: 60px;
		font-weight: 700;
	}
	.wm .wcn {
		left: 1696px;
		top: 868px;
		font-size: 58px;
		line-height: 74px;
		font-weight: 700;
		font-family: 'Noto Sans CJK SC', sans-serif;
	}
	.wm .wurl {
		left: 1475px;
		top: 942px;
		font-size: 42px;
		line-height: 52px;
	}
	.scrollind {
		position: absolute;
		left: 1912px;
		top: 878px;
		box-sizing: border-box;
		width: 8px;
		height: 50px;
		border: 2px solid #777;
		border-radius: 3px;
		background: #f0f0f0;
		display: flex;
		align-items: flex-end;
		justify-content: center;
	}
	.scrollind i {
		width: 3px;
		height: 28px;
		background: #f57c20;
	}
</style>
